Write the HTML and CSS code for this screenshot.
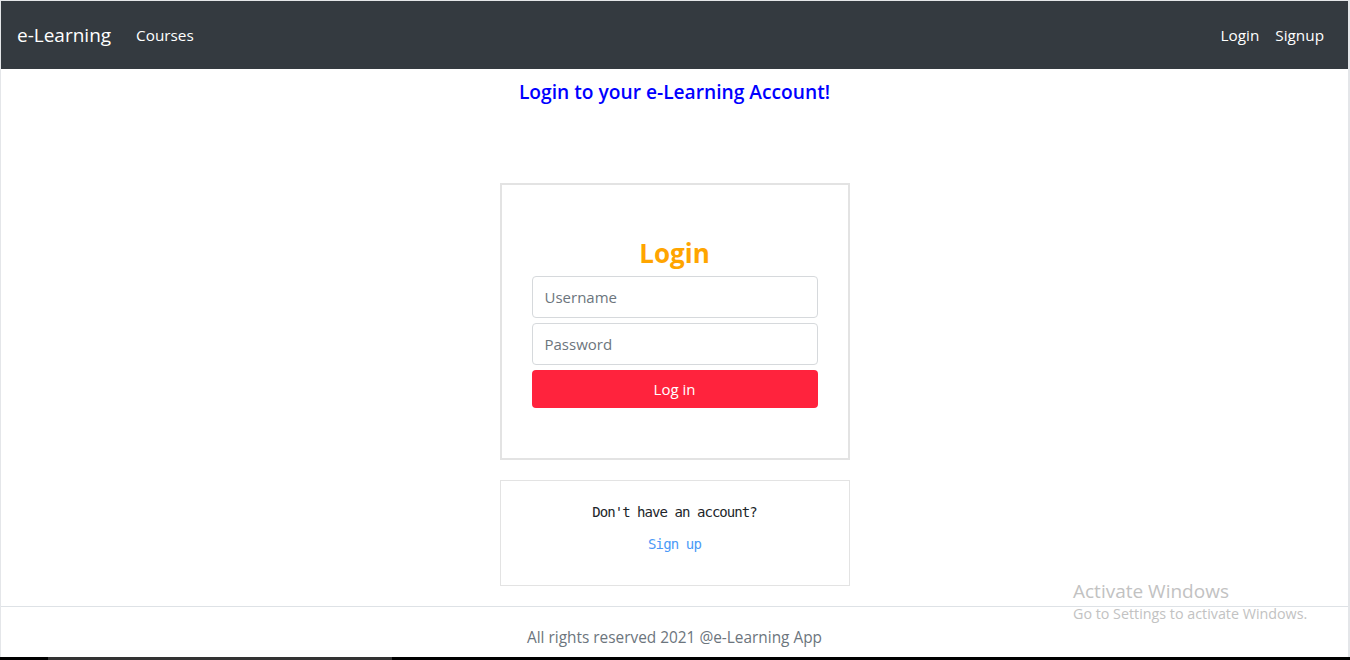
FILE: index.html
```html
<!DOCTYPE html>
<html lang="en">
<head>
<meta charset="utf-8">
<title>e-Learning Login</title>
<link rel="stylesheet" href="styles.css">
</head>
<body>
<div class="page">
  <nav class="navbar">
    <div class="nav-left">
      <a class="brand" href="#">e-Learning</a>
      <a class="nav-link" href="#">Courses</a>
    </div>
    <div class="nav-right">
      <a class="nav-link" href="#">Login</a>
      <a class="nav-link" href="#">Signup</a>
    </div>
  </nav>
  <main class="main">
    <h5 class="title">Login to your e-Learning Account!</h5>
    <div class="card login-card">
      <h2 class="login-title">Login</h2>
      <input class="field" type="text" placeholder="Username">
      <input class="field" type="password" placeholder="Password">
      <button class="btn-login" type="button">Log in</button>
    </div>
    <div class="card signup-card">
      <p class="signup-text">Don't have an account?</p>
      <a class="signup-link" href="#">Sign up</a>
    </div>
  </main>
  <footer class="footer">All rights reserved 2021 @e-Learning App</footer>
  <div class="taskbar"><span class="taskbar-seg"></span></div>
</div>
<div class="watermark">
  <div class="wm-title">Activate Windows</div>
  <div class="wm-sub">Go to Settings to activate Windows.</div>
</div>
</body>
</html>
```

FILE: styles.css
```css
* { box-sizing: border-box; }
html, body { margin: 0; padding: 0; }
body {
  font-family: "Open Sans", "Noto Sans", sans-serif;
  background: #fff;
  width: 1350px;
  height: 660px;
  overflow: hidden;
}
.page {
  width: 1350px;
  height: 660px;
  border-top: 1px solid #e4e6e9;
  border-left: 1px solid #e4e6e9;
  border-right: 2px solid #e4e6e9;
  display: flex;
  flex-direction: column;
}
.navbar {
  height: 68px;
  background: #343a40;
  display: flex;
  align-items: center;
  justify-content: space-between;
  padding: 0 16px;
  flex-shrink: 0;
}
.nav-left, .nav-right { display: flex; align-items: center; }
.brand {
  color: #fff;
  text-decoration: none;
  font-size: 19px;
  margin-right: 17px;
}
.nav-link {
  color: #fff;
  text-decoration: none;
  font-size: 15.3px;
  padding: 0 8px;
}
.nav-right .nav-link + .nav-link { margin-left: 0; }
.main {
  display: flex;
  flex-direction: column;
  align-items: center;
  flex: 1;
}
.title {
  margin: 11px 0 0;
  height: 24px;
  line-height: 24px;
  font-size: 19.2px;
  font-weight: 600;
  color: #0000ff;
}
.card {
  width: 350px;
  background: #fff;
}
.login-card {
  margin-top: 79px;
  border: 2px solid #e3e3e3;
  padding: 51px 30px 50px;
  display: flex;
  flex-direction: column;
}
.login-title {
  margin: 0 0 6px;
  height: 34px;
  line-height: 34px;
  text-align: center;
  color: #ffa500;
  font-size: 26px;
  font-weight: 700;
}
.field {
  height: 42px;
  border: 1px solid #d6d9dc;
  border-radius: 4px;
  padding: 0 12px;
  font-family: inherit;
  font-size: 15px;
  color: #495057;
  margin-bottom: 5px;
  outline: none;
}
.field::placeholder { color: #6c757d; }
.btn-login {
  height: 38px;
  border: none;
  border-radius: 4px;
  background: #ff233d;
  color: #fff;
  font-family: inherit;
  font-size: 15px;
  padding: 0;
}
.signup-card {
  margin-top: 20px;
  height: 106px;
  border: 1px solid #e3e3e3;
  display: flex;
  flex-direction: column;
  align-items: center;
  padding-top: 20px;
  font-family: "DejaVu Sans Mono", "Liberation Mono", monospace;
}
.signup-text {
  margin: 0;
  height: 22px;
  line-height: 22px;
  font-size: 14px;
  letter-spacing: -0.95px;
  color: #212529;
}
.signup-link {
  margin-top: 10px;
  line-height: 22px;
  font-size: 14px;
  letter-spacing: -0.85px;
  color: #4b9af7;
  text-decoration: none;
}
.footer {
  height: 51px;
  border-top: 1px solid #dee2e6;
  text-align: center;
  color: #6c757d;
  font-size: 15.4px;
  line-height: 24px;
  padding-top: 19px;
  flex-shrink: 0;
}
.taskbar {
  height: 3px;
  background: #000;
  margin-left: -1px;
  margin-right: -2px;
  flex-shrink: 0;
  display: flex;
}
.taskbar-seg {
  margin-left: 48px;
  width: 344px;
  background: #333;
}
.watermark {
  position: absolute;
  left: 1073px;
  top: 578px;
  color: #c2c2c2;
  font-family: "Open Sans", "Noto Sans", sans-serif;
  pointer-events: none;
}
.wm-title { font-size: 19px; line-height: 26px; }
.wm-sub { font-size: 14.3px; line-height: 20px; }
```
